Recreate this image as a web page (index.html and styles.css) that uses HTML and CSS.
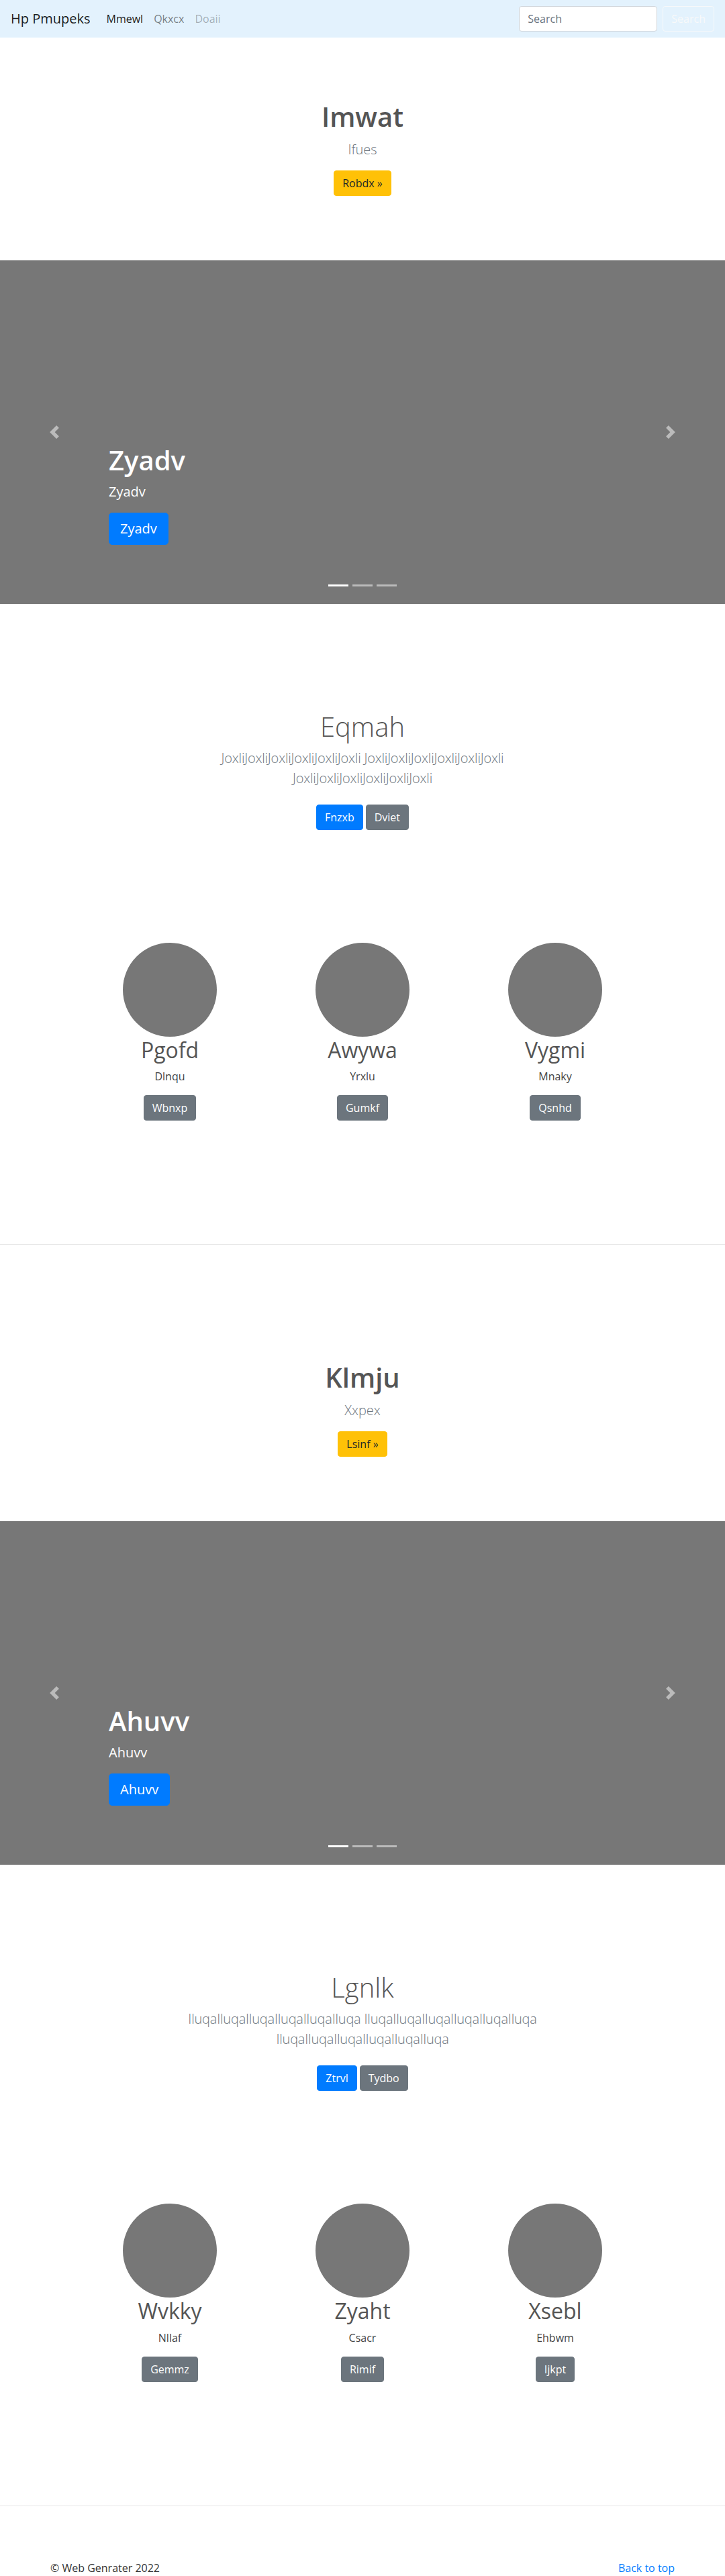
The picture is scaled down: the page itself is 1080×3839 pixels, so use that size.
FILE: index.html
```html
<!DOCTYPE html>
<html lang="en">
<head>
<meta charset="utf-8">
<title>Hp Pmupeks</title>
<link rel="stylesheet" href="styles.css">
</head>
<body>
<nav class="navbar">
  <a class="brand" href="#">Hp Pmupeks</a>
  <ul class="nav-links">
    <li><a class="nav-link active" href="#">Mmewl</a></li>
    <li><a class="nav-link" href="#">Qkxcx</a></li>
    <li><a class="nav-link disabled" href="#">Doaii</a></li>
  </ul>
  <form class="search">
    <input class="search-input" type="search" placeholder="Search">
    <button class="btn btn-outline-light" type="button">Search</button>
  </form>
</nav>

<main>
  <section class="hero">
    <h1 class="hero-title">Imwat</h1>
    <p class="hero-lead">Ifues</p>
    <a class="btn btn-warning" href="#">Robdx »</a>
  </section>

  <div class="carousel">
    <a class="control prev" href="#"><svg width="20" height="20" viewBox="0 0 8 8"><path fill="#fff" d="M5.25 0l-4 4 4 4 1.5-1.5L4.25 4l2.5-2.5L5.25 0z"/></svg></a>
    <div class="caption">
      <h1 class="caption-title">Zyadv</h1>
      <p class="caption-text">Zyadv</p>
      <div class="caption-actions"><a class="btn btn-lg btn-primary" href="#">Zyadv</a></div>
    </div>
    <a class="control next" href="#"><svg width="20" height="20" viewBox="0 0 8 8"><path fill="#fff" d="M2.75 0l-1.5 1.5L3.75 4l-2.5 2.5L2.75 8l4-4-4-4z"/></svg></a>
    <ol class="indicators"><li class="active"></li><li></li><li></li></ol>
  </div>

  <section class="album">
    <div class="album-inner">
      <h1 class="album-title">Eqmah</h1>
      <p class="album-lead">JoxliJoxliJoxliJoxliJoxliJoxli JoxliJoxliJoxliJoxliJoxliJoxli JoxliJoxliJoxliJoxliJoxliJoxli</p>
      <div class="album-actions">
        <a class="btn btn-primary" href="#">Fnzxb</a>
        <a class="btn btn-secondary" href="#">Dviet</a>
      </div>
    </div>
  </section>

  <section class="marketing">
    <div class="feature">
      <div class="feature-img"></div>
      <h2 class="feature-name">Pgofd</h2>
      <p class="feature-text">Dlnqu</p>
      <a class="btn btn-secondary" href="#">Wbnxp</a>
    </div>
    <div class="feature">
      <div class="feature-img"></div>
      <h2 class="feature-name">Awywa</h2>
      <p class="feature-text">Yrxlu</p>
      <a class="btn btn-secondary" href="#">Gumkf</a>
    </div>
    <div class="feature">
      <div class="feature-img"></div>
      <h2 class="feature-name">Vygmi</h2>
      <p class="feature-text">Mnaky</p>
      <a class="btn btn-secondary" href="#">Qsnhd</a>
    </div>
  </section>

  <hr class="divider">

  <section class="hero">
    <h1 class="hero-title">Klmju</h1>
    <p class="hero-lead">Xxpex</p>
    <a class="btn btn-warning" href="#">Lsinf »</a>
  </section>

  <div class="carousel">
    <a class="control prev" href="#"><svg width="20" height="20" viewBox="0 0 8 8"><path fill="#fff" d="M5.25 0l-4 4 4 4 1.5-1.5L4.25 4l2.5-2.5L5.25 0z"/></svg></a>
    <div class="caption">
      <h1 class="caption-title">Ahuvv</h1>
      <p class="caption-text">Ahuvv</p>
      <div class="caption-actions"><a class="btn btn-lg btn-primary" href="#">Ahuvv</a></div>
    </div>
    <a class="control next" href="#"><svg width="20" height="20" viewBox="0 0 8 8"><path fill="#fff" d="M2.75 0l-1.5 1.5L3.75 4l-2.5 2.5L2.75 8l4-4-4-4z"/></svg></a>
    <ol class="indicators"><li class="active"></li><li></li><li></li></ol>
  </div>

  <section class="album">
    <div class="album-inner">
      <h1 class="album-title">Lgnlk</h1>
      <p class="album-lead">IluqaIluqaIluqaIluqaIluqaIluqa IluqaIluqaIluqaIluqaIluqaIluqa IluqaIluqaIluqaIluqaIluqaIluqa</p>
      <div class="album-actions">
        <a class="btn btn-primary" href="#">Ztrvl</a>
        <a class="btn btn-secondary" href="#">Tydbo</a>
      </div>
    </div>
  </section>

  <section class="marketing">
    <div class="feature">
      <div class="feature-img"></div>
      <h2 class="feature-name">Wvkky</h2>
      <p class="feature-text">Nllaf</p>
      <a class="btn btn-secondary" href="#">Gemmz</a>
    </div>
    <div class="feature">
      <div class="feature-img"></div>
      <h2 class="feature-name">Zyaht</h2>
      <p class="feature-text">Csacr</p>
      <a class="btn btn-secondary" href="#">Rimif</a>
    </div>
    <div class="feature">
      <div class="feature-img"></div>
      <h2 class="feature-name">Xsebl</h2>
      <p class="feature-text">Ehbwm</p>
      <a class="btn btn-secondary" href="#">Ijkpt</a>
    </div>
  </section>

  <hr class="divider">
</main>

<footer class="footer">
  <p>© Web Genrater 2022</p>
  <a class="top-link" href="#">Back to top</a>
</footer>
</body>
</html>
```

FILE: styles.css
```css
* {
  box-sizing: border-box;
}

body {
  margin: 0;
  font-family: "Open Sans", "Noto Sans", sans-serif;
  font-size: 16px;
  line-height: 1.5;
  color: #212529;
  background: #fff;
}

h1, h2, p, ol {
  margin: 0;
}

/* Navbar */
.navbar {
  display: flex;
  align-items: center;
  height: 56px;
  padding: 8px 16px;
  background: #e3f2fd;
}

.brand {
  font-size: 20px;
  line-height: 30px;
  padding: 5px 0;
  margin-right: 16px;
  color: rgba(0, 0, 0, .9);
  text-decoration: none;
}

.nav-links {
  display: flex;
  list-style: none;
  margin: 0;
  padding: 0;
}

.nav-link {
  display: block;
  padding: 8px;
  color: rgba(0, 0, 0, .5);
  text-decoration: none;
}

.nav-link.active {
  color: rgba(0, 0, 0, .9);
}

.nav-link.disabled {
  color: rgba(0, 0, 0, .3);
}

.search {
  margin: 0 0 0 auto;
  display: flex;
  align-items: center;
  gap: 8px;
}

.search-input {
  width: 206px;
  height: 38px;
  padding: 6px 12px;
  border: 1px solid #ced4da;
  border-radius: 4px;
  font: inherit;
  font-size: 16px;
  color: #495057;
  background: #fff;
}

.search-input::placeholder {
  color: #6c757d;
}

/* Buttons */
.btn {
  display: inline-block;
  font-family: inherit;
  font-size: 16px;
  font-weight: 400;
  line-height: 24px;
  padding: 6px 12px;
  border: 1px solid transparent;
  border-radius: 4px;
  text-decoration: none;
  text-align: center;
  white-space: nowrap;
  cursor: pointer;
}

.btn-lg {
  font-size: 20px;
  line-height: 30px;
  padding: 8px 16px;
  border-radius: 5px;
}

.btn-outline-light {
  color: #f8f9fa;
  border-color: #f8f9fa;
  background: transparent;
}

.btn-warning {
  color: #212529;
  background: #ffc107;
  border-color: #ffc107;
}

.btn-primary {
  color: #fff;
  background: #007bff;
  border-color: #007bff;
}

.btn-secondary {
  color: #fff;
  background: #6c757d;
  border-color: #6c757d;
}

/* Hero */
.hero {
  display: flex;
  flex-direction: column;
  align-items: center;
  padding: 94px 0 96px;
  text-align: center;
}

.hero-title {
  font-size: 40px;
  font-weight: 600;
  line-height: 1.2;
  color: #555;
  margin-bottom: 10px;
}

.hero-lead {
  font-size: 20px;
  font-weight: 300;
  line-height: 30px;
  color: #6c757d;
  margin-bottom: 16px;
}

/* Carousel */
.carousel {
  position: relative;
  height: 512px;
  background: #777;
  overflow: hidden;
}

.control {
  position: absolute;
  top: 0;
  bottom: 0;
  width: 15%;
  display: flex;
  align-items: center;
  justify-content: center;
  opacity: .5;
}

.control.prev {
  left: 0;
}

.control.next {
  right: 0;
}

.caption {
  position: absolute;
  left: 15%;
  right: 15%;
  bottom: 48px;
  padding: 20px 0;
  color: #fff;
  text-align: left;
}

.caption-title {
  font-size: 40px;
  font-weight: 600;
  line-height: 1.2;
  margin-bottom: 8px;
}

.caption-text {
  font-size: 20px;
  line-height: 30px;
  margin-bottom: 16px;
}

.caption-actions {
  margin-bottom: 20px;
}

.indicators {
  position: absolute;
  left: 0;
  right: 0;
  bottom: 26px;
  display: flex;
  justify-content: center;
  gap: 6px;
  list-style: none;
  padding: 0;
}

.indicators li {
  width: 30px;
  height: 3px;
  background: #fff;
  opacity: .5;
}

.indicators li.active {
  opacity: 1;
}

/* Album heading */
.album {
  padding-top: 159px;
  text-align: center;
}

.album-inner {
  max-width: 610px;
  margin: 0 auto;
}

.album-title {
  font-size: 40px;
  font-weight: 300;
  line-height: 1.2;
  color: #555;
  margin-bottom: 8px;
}

.album-lead {
  font-size: 20px;
  font-weight: 300;
  line-height: 30px;
  color: #6c757d;
  margin-bottom: 16px;
  letter-spacing: -0.2px;
}

.album-actions {
  display: flex;
  justify-content: center;
  gap: 4px;
  padding: 8px 0;
}

/* Marketing */
.marketing {
  display: grid;
  grid-template-columns: repeat(3, 287px);
  justify-content: center;
  padding-top: 160px;
}

.feature {
  display: flex;
  flex-direction: column;
  align-items: center;
  text-align: center;
}

.feature-img {
  width: 140px;
  height: 140px;
  border-radius: 50%;
  background: #777;
  margin-bottom: 1px;
}

.feature-name {
  font-size: 32px;
  font-weight: 400;
  line-height: 1.2;
  color: #555;
  margin-bottom: 8px;
}

.feature-text {
  color: #444;
  margin-bottom: 16px;
}

.divider {
  height: 1px;
  border: 0;
  background: #e6e6e6;
  margin: 184px 0 80px;
}

/* Footer */
.footer {
  max-width: 960px;
  margin: 0 auto;
  padding: 0 15px;
  display: flex;
  justify-content: space-between;
  color: #333;
}

.top-link {
  color: #007bff;
  text-decoration: none;
}
```
